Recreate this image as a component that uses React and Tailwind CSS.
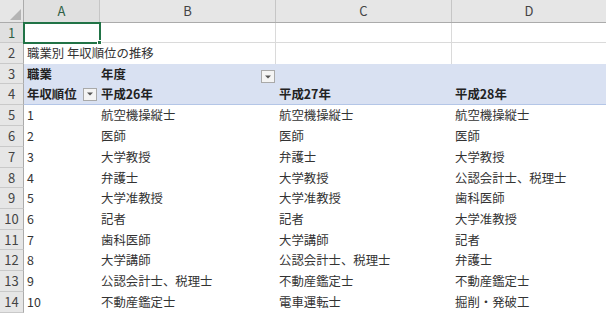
import React from "react";

const FONT = { fontFamily: '"Noto Sans CJK JP", "Noto Sans", sans-serif' };

const heights = [20, 21, 20, 21, 21, 21, 21, 20, 21, 21, 20, 21, 21, 21];

const B = ["航空機操縦士", "医師", "大学教授", "弁護士", "大学准教授", "記者", "歯科医師", "大学講師", "公認会計士、税理士", "不動産鑑定士"];
const C = ["航空機操縦士", "医師", "弁護士", "大学教授", "大学准教授", "記者", "大学講師", "公認会計士、税理士", "不動産鑑定士", "電車運転士"];
const D = ["航空機操縦士", "医師", "大学教授", "公認会計士、税理士", "歯科医師", "大学准教授", "記者", "弁護士", "不動産鑑定士", "掘削・発破工"];

function FilterBtn() {
  return (
    <div className="w-[14px] h-[13px] border border-[#a9a9a9] bg-[#f4f4f4] flex items-center justify-center shrink-0">
      <svg width="6" height="4" viewBox="0 0 6 4">
        <path d="M0 0.5 H6 L3 3.5 Z" fill="#555" />
      </svg>
    </div>
  );
}

function RowHead({ n, h, selected }) {
  return (
    <div
      className={`w-[24px] shrink-0 flex items-center justify-center border-r border-r-[#ababab] border-b border-b-[#c9c9c9] text-[13px] ${selected ? "bg-[#e0e0e0] text-[#2f5f45]" : "bg-[#e6e6e6] text-[#444]"}`}
      style={{ height: h }}
    >
      {n}
    </div>
  );
}

export default function App() {
  return (
    <div className="w-[606px] h-[313px] overflow-hidden bg-white relative select-none" style={FONT}>
      {/* column headers */}
      <div className="flex h-[23px] bg-[#e6e6e6] border-b border-b-[#ababab]">
        <div className="w-[24px] shrink-0 border-r border-r-[#ababab] relative">
          <svg className="absolute right-[2px] bottom-[2px]" width="11" height="11" viewBox="0 0 11 11">
            <path d="M11 0 V11 H0 Z" fill="#b4b4b4" />
          </svg>
        </div>
        <div className="w-[76px] shrink-0 flex items-center justify-center text-[13px] text-[#2f5f45] bg-[#e0e0e0] border-r border-r-[#c6c6c6]">A</div>
        <div className="w-[176px] shrink-0 flex items-center justify-center text-[13px] text-[#444] border-r border-r-[#c6c6c6]">B</div>
        <div className="w-[176px] shrink-0 flex items-center justify-center text-[13px] text-[#444] border-r border-r-[#c6c6c6]">C</div>
        <div className="flex-1 flex items-center justify-center text-[13px] text-[#444]">D</div>
      </div>

      {/* row 1 */}
      <div className="flex">
        <RowHead n={1} h={heights[0]} selected />
        <div className="w-[76px] shrink-0 border-r border-b border-[#dadada]" />
        <div className="w-[176px] shrink-0 border-r border-b border-[#dadada]" />
        <div className="w-[176px] shrink-0 border-r border-b border-[#dadada]" />
        <div className="flex-1 border-b border-[#dadada]" />
      </div>

      {/* row 2 */}
      <div className="flex">
        <RowHead n={2} h={heights[1]} />
        <div className="w-[252px] shrink-0 border-r border-[#dadada] flex items-center pl-[3px] text-[12.4px] text-[#333] whitespace-nowrap">
          職業別 年収順位の推移
        </div>
        <div className="w-[176px] shrink-0 border-r border-[#dadada]" />
        <div className="flex-1" />
      </div>

      {/* row 3 */}
      <div className="flex">
        <RowHead n={3} h={heights[2]} />
        <div className="flex-1 flex bg-[#d9e1f2] text-[12.4px] font-bold text-[#222]">
          <div className="w-[76px] shrink-0 flex items-center pl-[3px]">職業</div>
          <div className="w-[176px] shrink-0 flex items-center justify-between pl-[1px] pr-[1px]">
            <span>年度</span>
            <div className="self-end mb-[1px]"><FilterBtn /></div>
          </div>
          <div className="flex-1" />
        </div>
      </div>

      {/* row 4 */}
      <div className="flex">
        <RowHead n={4} h={heights[3]} />
        <div className="flex-1 flex bg-[#d9e1f2] border-b border-b-[#b4c6e7] text-[12.4px] font-bold text-[#222]">
          <div className="w-[76px] shrink-0 flex items-center justify-between pl-[3px] pr-[3px]">
            <span>年収順位</span>
            <FilterBtn />
          </div>
          <div className="w-[176px] shrink-0 flex items-center pl-[1px]">平成26年</div>
          <div className="w-[176px] shrink-0 flex items-center pl-[3px]">平成27年</div>
          <div className="flex-1 flex items-center pl-[3px]">平成28年</div>
        </div>
      </div>

      {/* data rows */}
      {B.map((b, i) => (
        <div className="flex" key={i}>
          <RowHead n={i + 5} h={heights[i + 4]} />
          <div className="flex-1 flex text-[12.4px] text-[#333] whitespace-nowrap">
            <div className="w-[76px] shrink-0 flex items-center pl-[3px]">{i + 1}</div>
            <div className="w-[176px] shrink-0 flex items-center pl-[1px]">{b}</div>
            <div className="w-[176px] shrink-0 flex items-center pl-[3px]">{C[i]}</div>
            <div className="flex-1 flex items-center pl-[3px]">{D[i]}</div>
          </div>
        </div>
      ))}

      {/* selection overlay */}
      <div className="absolute left-[23px] top-[22px] w-[78px] h-[22px] border-2 border-[#217346] pointer-events-none" />
      <div className="absolute left-[97px] top-[40px] w-[5px] h-[5px] bg-[#217346] border border-white pointer-events-none" />
    </div>
  );
}
